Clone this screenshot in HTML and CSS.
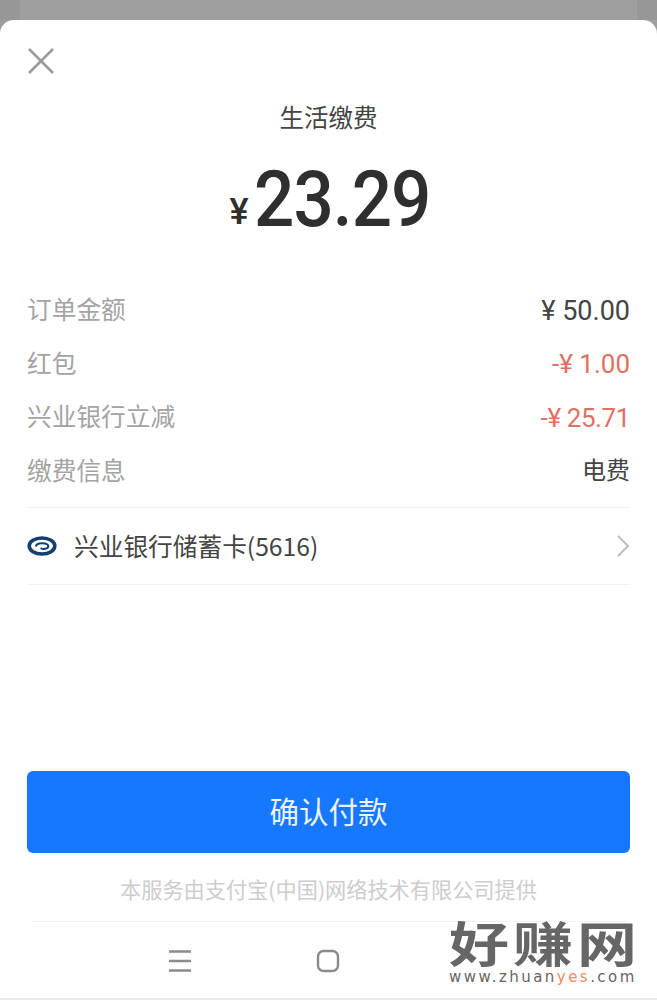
FILE: index.html
```html
<!DOCTYPE html>
<html lang="zh-CN">
<head>
<meta charset="utf-8">
<title>生活缴费</title>
<link rel="stylesheet" href="styles.css">
</head>
<body>
<div class="screen">
  <div class="backdrop"><div class="backdrop-inner"></div></div>
  <main class="sheet">
    <div class="head">
      <svg class="close" width="28" height="28" viewBox="0 0 28 28"><path d="M2 2 L26 26 M26 2 L2 26" stroke="#9a9a9a" stroke-width="2.6" fill="none"/></svg>
    </div>
    <h1 class="title">生活缴费</h1>
    <div class="amount"><span class="cur">¥</span><span class="num">23.29</span></div>
    <div class="rows">
      <div class="row"><span class="label">订单金额</span><span class="val">¥ 50.00</span></div>
      <div class="row"><span class="label">红包</span><span class="val red">-¥ 1.00</span></div>
      <div class="row"><span class="label">兴业银行立减</span><span class="val red tight">-¥ 25.71</span></div>
      <div class="row"><span class="label">缴费信息</span><span class="val cn">电费</span></div>
    </div>
    <div class="card">
      <svg class="bank" width="30" height="20" viewBox="0 0 30 20"><ellipse cx="15" cy="10" rx="12.8" ry="8" fill="none" stroke="#153f72" stroke-width="3.6"/><path d="M8.8 10.5 C9.5 6.2 20.5 6.2 21.3 10 C21.3 13.2 15.5 13.8 13.8 11.8" fill="none" stroke="#153f72" stroke-width="2"/></svg>
      <span class="card-name">兴业银行储蓄卡(5616)</span>
      <svg class="chev" width="14" height="24" viewBox="0 0 14 24"><path d="M2 2 L12 12 L2 22" stroke="#c0c0c0" stroke-width="2.2" fill="none"/></svg>
    </div>
    <div class="spacer"></div>
    <button class="pay">确认付款</button>
    <p class="note">本服务由支付宝(中国)网络技术有限公司提供</p>
    <nav class="nav">
      <svg width="24" height="24" viewBox="0 0 24 24"><path d="M1 2.5 H23 M1 12 H23 M1 21.5 H23" stroke="#8a8a8a" stroke-width="2.4" fill="none"/></svg>
      <svg width="24" height="24" viewBox="0 0 24 24"><rect x="2" y="2" width="20" height="20" rx="5.5" stroke="#8a8a8a" stroke-width="2.4" fill="none"/></svg>
    </nav>
  </main>
  <div class="mark">
    <div class="mark-cn">好赚网</div>
    <div class="mark-en">www.zhuan<span class="yes">yes</span>.com</div>
  </div>
</div>
</body>
</html>
```

FILE: styles.css
```css
* { box-sizing: border-box; }
html, body { margin: 0; padding: 0; background: #fff; }
body { font-family: "Noto Sans CJK SC", "Liberation Sans", sans-serif; }
.screen { position: relative; width: 657px; height: 1000px; overflow: hidden; background: #9e9e9e; }
.backdrop { height: 20px; background: #979797; padding: 0 20px; }
.backdrop-inner { height: 20px; background: #9f9f9f; }
.sheet { height: 980px; background: #fff; border-radius: 14px 14px 0 0; padding: 0 27px; display: flex; flex-direction: column; border-bottom: 2px solid #e8e8e8; }
.head { height: 68px; display: flex; align-items: center; padding-top: 13px; }
.close { display: block; }
.title { margin: 14px 0 0; height: 30px; line-height: 30px; font-size: 24.5px; font-weight: 400; color: #444; text-align: center; }
.amount { margin-top: 28px; padding-left: 3px; height: 80px; display: flex; justify-content: center; align-items: baseline; color: #2f2f2f; font-family: "Roboto", "Liberation Sans", sans-serif; line-height: 80px; }
.cur { display: inline-block; font-size: 36px; font-weight: 500; margin-right: 5px; transform: translateY(-2px); }
.num { display: inline-block; font-size: 78px; font-weight: 500; letter-spacing: -1px; transform: scaleX(0.91); transform-origin: left center; margin-right: -17px; }
.rows { margin-top: 49px; display: flex; flex-direction: column; gap: 15.5px; }
.row { height: 38px; display: flex; justify-content: space-between; align-items: center; font-size: 24.7px; line-height: 38px; }
.label { color: #a3a3a3; }
.val { padding-top: 5px; color: #444; font-family: "Roboto", "Noto Sans CJK SC", sans-serif; font-size: 27px; }
.red { color: #e26f63; font-size: 26px; }
.tight { letter-spacing: -0.4px; }
.cn { padding-top: 4px; font-size: 24px; }
.card { margin-top: 19.5px; height: 78px; border-top: 1px solid #f2f2f2; border-bottom: 1px solid #f2f2f2; display: flex; align-items: center; }
.bank { display: block; }
.card-name { margin-left: 17px; flex: 1; font-size: 24.7px; line-height: 34px; padding-bottom: 3px; color: #444; }
.chev { display: block; margin-right: 0; }
.spacer { height: 186px; }
.pay { display: block; width: 100%; height: 82px; padding: 0 0 4px; background: #1677ff; border: 0; border-radius: 6px; color: #eaf2ff; font-family: inherit; font-size: 29.5px; font-weight: 400; }
.note { margin: 21px 0 0; height: 30px; line-height: 30px; text-align: center; font-size: 21.2px; color: #cdcdcd; white-space: nowrap; }
.nav { margin: 17px 4px 0; border-top: 1px solid #f2f2f2; display: flex; padding: 27px 0 0 137px; gap: 124px; }
.nav svg { display: block; }
.mark { position: absolute; left: 449px; top: 916px; width: 190px; color: #666; }
.mark-cn { height: 53px; font-size: 60px; line-height: 62px; font-weight: 700; letter-spacing: 4px; white-space: nowrap; transform: scaleY(0.8); transform-origin: left top; }
.mark-en { font-family: "DejaVu Sans", sans-serif; font-size: 15px; line-height: 16px; letter-spacing: 2.45px; white-space: nowrap; }
.yes { color: #ef8a5a; }
```
